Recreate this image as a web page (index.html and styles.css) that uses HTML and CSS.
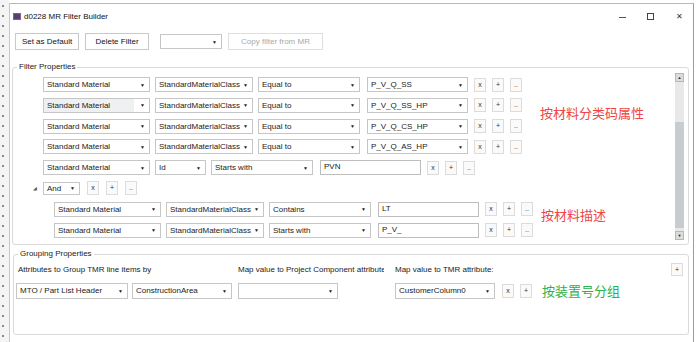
FILE: index.html
```html
<!DOCTYPE html>
<html lang="en">
<head>
  <meta charset="UTF-8">
  <title>d0228 MR Filter Builder</title>
  <link rel="stylesheet" href="styles.css">
</head>
<body>
  <div class="backdrop"></div>
  <div class="window">
    <!-- Title bar -->
    <div class="titlebar">
      <span class="app-icon"></span>
      <span class="title">d0228 MR Filter Builder</span>
      <span class="win-btn win-min"></span>
      <span class="win-btn win-max"></span>
      <span class="win-btn win-close">&#x2715;</span>
    </div>

    <!-- Toolbar -->
    <div class="toolbar">
      <button class="btn btn-default">Set as Default</button>
      <button class="btn btn-delete">Delete Filter</button>
      <span class="combo combo-tool"><span class="combo-text"></span><span class="arrow">&#9660;</span></span>
      <button class="btn btn-disabled">Copy filter from MR</button>
    </div>

    <!-- Filter properties -->
    <fieldset class="group group-filter">
      <legend>Filter Properties</legend>
      <div class="filter-body">
        <div class="rows">
          <div class="row">
            <span class="combo w-mat"><span class="combo-text">Standard Material</span><span class="arrow">&#9660;</span></span>
            <span class="combo w-cls"><span class="combo-text">StandardMaterialClass</span><span class="arrow">&#9660;</span></span>
            <span class="combo w-op"><span class="combo-text">Equal to</span><span class="arrow">&#9660;</span></span>
            <span class="combo w-val"><span class="combo-text">P_V_Q_SS</span><span class="arrow">&#9660;</span></span>
            <span class="sq">x</span><span class="sq">+</span><span class="sq">..</span>
          </div>
          <div class="row">
            <span class="combo w-mat hover"><span class="combo-text">Standard Material</span><span class="arrow">&#9660;</span></span>
            <span class="combo w-cls"><span class="combo-text">StandardMaterialClass</span><span class="arrow">&#9660;</span></span>
            <span class="combo w-op"><span class="combo-text">Equal to</span><span class="arrow">&#9660;</span></span>
            <span class="combo w-val"><span class="combo-text">P_V_Q_SS_HP</span><span class="arrow">&#9660;</span></span>
            <span class="sq">x</span><span class="sq">+</span><span class="sq">..</span>
            <span class="note note-red">按材料分类码属性</span>
          </div>
          <div class="row">
            <span class="combo w-mat"><span class="combo-text">Standard Material</span><span class="arrow">&#9660;</span></span>
            <span class="combo w-cls"><span class="combo-text">StandardMaterialClass</span><span class="arrow">&#9660;</span></span>
            <span class="combo w-op"><span class="combo-text">Equal to</span><span class="arrow">&#9660;</span></span>
            <span class="combo w-val"><span class="combo-text">P_V_Q_CS_HP</span><span class="arrow">&#9660;</span></span>
            <span class="sq">x</span><span class="sq">+</span><span class="sq">..</span>
          </div>
          <div class="row">
            <span class="combo w-mat"><span class="combo-text">Standard Material</span><span class="arrow">&#9660;</span></span>
            <span class="combo w-cls"><span class="combo-text">StandardMaterialClass</span><span class="arrow">&#9660;</span></span>
            <span class="combo w-op"><span class="combo-text">Equal to</span><span class="arrow">&#9660;</span></span>
            <span class="combo w-val"><span class="combo-text">P_V_Q_AS_HP</span><span class="arrow">&#9660;</span></span>
            <span class="sq">x</span><span class="sq">+</span><span class="sq">..</span>
          </div>
          <div class="row">
            <span class="combo w-mat"><span class="combo-text">Standard Material</span><span class="arrow">&#9660;</span></span>
            <span class="combo w-id"><span class="combo-text">Id</span><span class="arrow">&#9660;</span></span>
            <span class="combo w-op"><span class="combo-text">Starts with</span><span class="arrow">&#9660;</span></span>
            <span class="textbox w-val">PVN</span>
            <span class="sq">x</span><span class="sq">+</span><span class="sq">..</span>
          </div>
          <div class="row row-and">
            <span class="expander">&#9698;</span>
            <span class="combo combo-small w-and"><span class="combo-text">And</span><span class="arrow">&#9660;</span></span>
            <span class="sq">x</span><span class="sq">+</span><span class="sq sq-wide">..</span>
          </div>
          <div class="row row-nested">
            <span class="combo w-mat"><span class="combo-text">Standard Material</span><span class="arrow">&#9660;</span></span>
            <span class="combo w-cls"><span class="combo-text">StandardMaterialClass</span><span class="arrow">&#9660;</span></span>
            <span class="combo w-op"><span class="combo-text">Contains</span><span class="arrow">&#9660;</span></span>
            <span class="textbox w-val">LT</span>
            <span class="sq">x</span><span class="sq">+</span><span class="sq">..</span>
            <span class="note note-red note-low">按材料描述</span>
          </div>
          <div class="row row-nested">
            <span class="combo w-mat"><span class="combo-text">Standard Material</span><span class="arrow">&#9660;</span></span>
            <span class="combo w-cls"><span class="combo-text">StandardMaterialClass</span><span class="arrow">&#9660;</span></span>
            <span class="combo w-op"><span class="combo-text">Starts with</span><span class="arrow">&#9660;</span></span>
            <span class="textbox w-val">P_V_</span>
            <span class="sq">x</span><span class="sq">+</span><span class="sq">..</span>
          </div>
        </div>
        <div class="scrollbar">
          <span class="sb-arrow">&#9650;</span>
          <span class="sb-track"><span class="sb-thumb"></span></span>
          <span class="sb-arrow">&#9660;</span>
        </div>
      </div>
    </fieldset>

    <!-- Grouping properties -->
    <fieldset class="group group-grouping">
      <legend>Grouping Properties</legend>
      <div class="labels">
        <span class="lbl lbl-1">Attributes to Group TMR line items by</span>
        <span class="lbl lbl-2">Map value to Project Component attribute</span>
        <span class="lbl lbl-3">Map value to TMR attribute:</span>
        <span class="sq sq-add">+</span>
      </div>
      <div class="group-row">
        <span class="combo w-hdr"><span class="combo-text">MTO / Part List Header</span><span class="arrow">&#9660;</span></span>
        <span class="combo w-area"><span class="combo-text">ConstructionArea</span><span class="arrow">&#9660;</span></span>
        <span class="combo w-map"><span class="combo-text"></span><span class="arrow">&#9660;</span></span>
        <span class="combo w-cust"><span class="combo-text">CustomerColumn0</span><span class="arrow">&#9660;</span></span>
        <span class="sq gap-sq">x</span><span class="sq">+</span>
        <span class="note note-green">按装置号分组</span>
      </div>
    </fieldset>
  </div>
</body>
</html>
```

FILE: styles.css
```css
html, body {
  margin: 0;
  height: 100%;
  background: #fff;
}
body {
  display: flex;
  align-items: flex-start;
  padding-top: 3px;
  box-sizing: border-box;
  font-family: "Liberation Sans", Arial, sans-serif;
  font-size: 8px;
  color: #222;
  overflow: hidden;
}
/* strip of the window behind */
.backdrop {
  width: 9px;
  height: 342px;
  margin-top: -3px;
  flex-shrink: 0;
  background:
    repeating-linear-gradient(180deg, transparent 0 5px, #8a8a8a 5px 7px, transparent 7px 10px) 2px 0 / 2px 100% no-repeat,
    #f4f4f4;
}
.window {
  width: 685px;
  height: 345px;
  border-top: 1px solid #b8b8b8;
  border-left: 1px solid #c8c8c8;
  border-right: 1px solid #9c9c9c;
  background: #fff;
  box-sizing: border-box;
  display: flex;
  flex-direction: column;
}
.titlebar {
  height: 24px;
  display: flex;
  align-items: center;
  padding-left: 3px;
}
.app-icon {
  width: 8px;
  height: 7px;
  background: #5b3f6e;
  border: 1px solid #7d6390;
  box-sizing: border-box;
  margin-right: 3px;
}
.title {
  font-size: 8px;
  color: #111;
}
.win-btn {
  width: 7px;
  height: 7px;
  box-sizing: border-box;
  color: #333;
  font-size: 8px;
  line-height: 7px;
  text-align: center;
}
.win-min {
  margin-left: auto;
  height: 1px;
  background: #555;
  margin-top: 2px;
}
.win-max {
  margin-left: 21px;
  border: 1px solid #444;
}
.win-close {
  margin-left: 22px;
  margin-right: 10px;
}
.toolbar {
  display: flex;
  align-items: center;
  padding: 5px 0 0 5px;
  gap: 6px;
}
.btn {
  height: 17px;
  padding: 0;
  font-family: inherit;
  font-size: 8px;
  color: #111;
  background: #fff;
  border: 1px solid #c9c9c9;
  border-radius: 0;
}
.btn-default { width: 64px; }
.btn-delete { width: 64px; }
.btn-disabled {
  width: 95px;
  color: #a8a8a8;
  border-color: #dedede;
}
.combo-tool {
  width: 62px;
  height: 15px;
  margin-left: 5px;
}
.group {
  margin: 0;
  padding: 0;
  border: 1px solid #dadada;
  border-radius: 3px;
  min-width: 0;
}
.group legend {
  padding: 0 2px;
  margin-left: 4px;
  line-height: 10px;
  font-size: 8px;
  color: #222;
}
.group-filter {
  margin: 12px 4px 0 2px;
  padding-bottom: 4px;
}
.filter-body {
  display: flex;
  align-items: flex-start;
}
.rows {
  flex: 1;
  display: flex;
  flex-direction: column;
  gap: 5.8px;
  padding: 5px 0 0 30px;
}
.row {
  display: flex;
  align-items: center;
  height: 15px;
  gap: 5px;
}
.row-nested {
  padding-left: 11px;
}
.row-and {
  gap: 7px;
}
.combo, .textbox {
  height: 15px;
  box-sizing: border-box;
  border: 1px solid #c6c6c6;
  background: #fff;
  display: flex;
  align-items: center;
  padding: 0 3px;
  white-space: nowrap;
  overflow: hidden;
  flex-shrink: 0;
}
.textbox {
  align-items: flex-start;
  line-height: 11px;
  border-color: #bdbdbd;
}
.combo-text {
  flex: 1;
  overflow: hidden;
}
.combo.hover {
  background: linear-gradient(90deg, #eef0f2 0 86%, #fff 86%);
}
.arrow {
  font-size: 5px;
  color: #222;
  margin-left: 2px;
  margin-right: 1px;
}
.combo-small {
  height: 13px;
}
.w-mat { width: 107px; }
.w-cls { width: 98px; }
.w-op { width: 102px; }
.w-val { width: 101px; margin-left: 2px; }
.w-id { width: 51px; }
.w-and { width: 37px; }
.expander {
  font-size: 5px;
  color: #555;
  width: 6px;
  margin-left: -10px;
  margin-right: -3px;
}
.sq {
  width: 12px;
  height: 14px;
  box-sizing: border-box;
  border: 1px solid #dcdcdc;
  background: #fafafa;
  font-size: 7px;
  line-height: 12px;
  text-align: center;
  color: #333;
  flex-shrink: 0;
}
.row .sq { margin-left: 1px; }
.row-and .sq { margin-left: 0; }
.row-and .sq-wide { margin-left: 0; }
.note {
  font-family: "Noto Sans CJK SC", sans-serif;
  font-size: 13px;
  white-space: nowrap;
}
.note-red {
  color: #ee4545;
  margin-left: 13px;
  margin-top: 14px;
}
.note-low {
  margin-left: 3px;
  margin-top: 11px;
}
.note-green {
  color: #2bb24c;
  margin-left: 6px;
}
.scrollbar {
  width: 9px;
  height: 167px;
  margin: 1px 4px 0 0;
  display: flex;
  flex-direction: column;
  background: #e8e8e8;
}
.sb-arrow {
  height: 9px;
  box-sizing: border-box;
  border: 1px solid #b8b8b8;
  background: #dcdcdc;
  font-size: 4px;
  line-height: 7px;
  text-align: center;
  color: #222;
}
.sb-track {
  flex: 1;
  display: flex;
  flex-direction: column;
  padding: 40px 0 3px;
}
.sb-thumb {
  flex: 1;
  background: #c7ccd1;
}
.group-grouping {
  margin: 4px 4px 0 3px;
  height: 86px;
  box-sizing: border-box;
}
.labels {
  display: flex;
  align-items: center;
  padding: 3px 0 0 4px;
  height: 14px;
}
.lbl {
  white-space: nowrap;
  overflow: hidden;
}
.lbl-1 { width: 220px; }
.lbl-2 { width: 146px; margin-right: 11px; }
.lbl-3 { flex: 1; }
.sq-add {
  margin-right: 5px;
  height: 13px;
}
.group-row {
  display: flex;
  align-items: center;
  padding: 5px 0 0 2px;
  gap: 4px;
}
.group-row .combo { height: 16px; }
.w-hdr { width: 112px; }
.w-area { width: 100px; }
.w-map { width: 100px; margin-left: 2px; }
.w-cust { width: 100px; margin-left: 53px; }
.group-row .gap-sq { margin-left: 3px; }
.group-row .sq + .sq { margin-left: 2px; }
```
